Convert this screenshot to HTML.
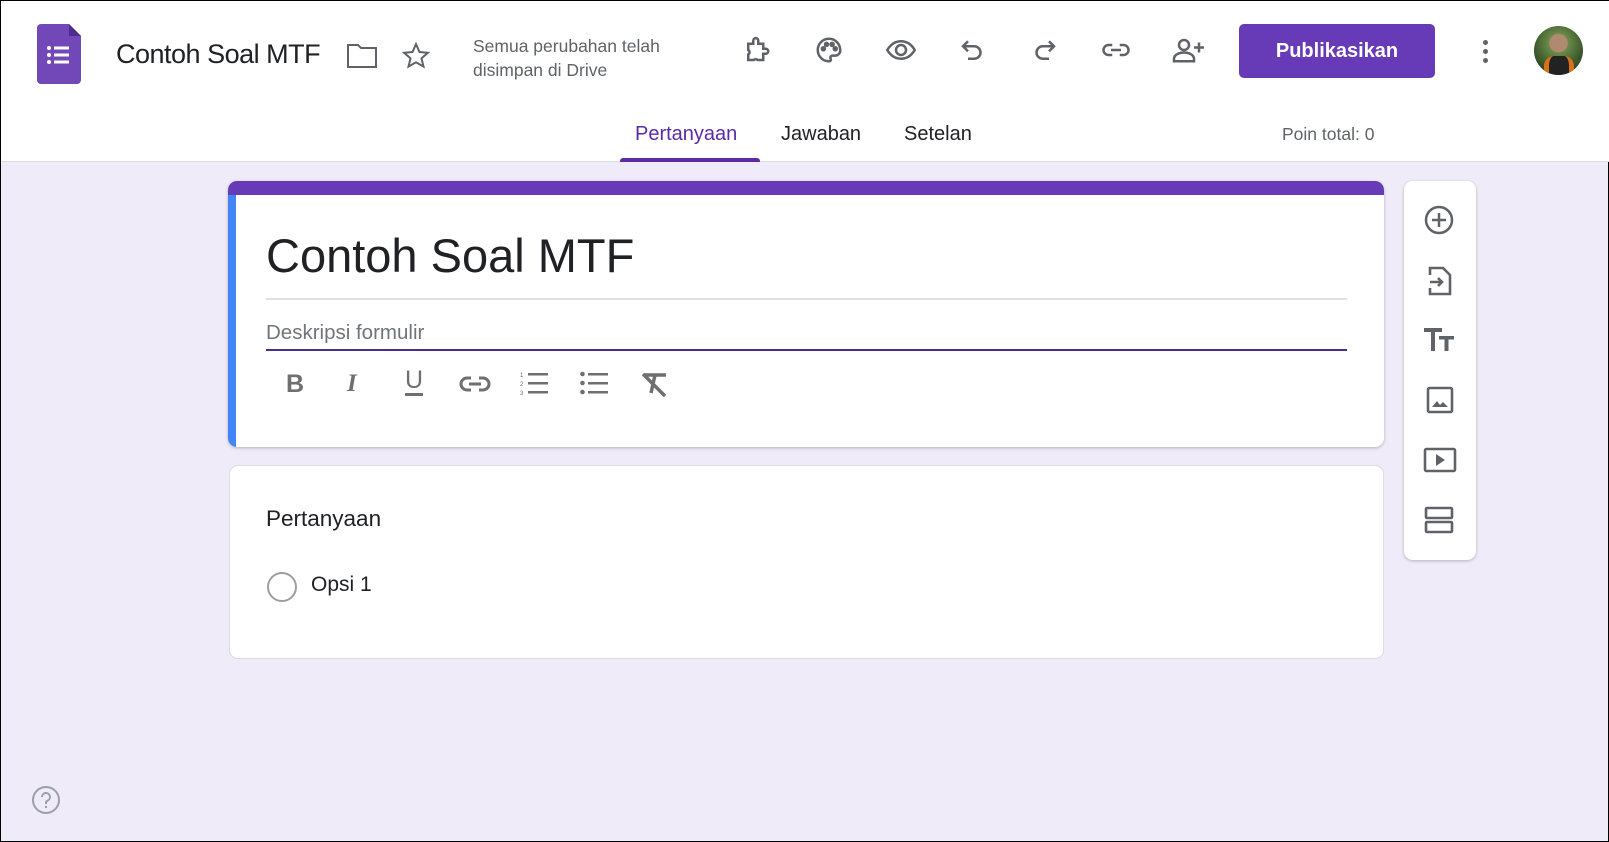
<!DOCTYPE html>
<html><head><meta charset="utf-8"><style>
*{box-sizing:border-box;margin:0;padding:0}
body{width:1609px;height:842px;overflow:hidden;background:#f0ebf8;font-family:"Liberation Sans",Arial,sans-serif;position:relative;border:1px solid #000}
.abs{position:absolute}
.hdr{left:0;top:0;width:1609px;height:161px;background:#fff;border-bottom:1px solid #dadce0}
svg.i{position:absolute;fill:none;stroke:#5f6368;stroke-width:2}
.card{background:#fff;border-radius:9px;border:1px solid #dadce0}
</style></head><body>
<div class="abs hdr"></div>
<svg class="abs" style="left:36px;top:23px" width="44" height="60" viewBox="0 0 44 60"><path d="M4 0H32L44 12V56a4 4 0 0 1-4 4H4a4 4 0 0 1-4-4V4a4 4 0 0 1 4-4z" fill="#7248b9"/><path d="M32 0L44 12H32z" fill="#4d2b8f"/><g fill="#fff"><circle cx="12" cy="24" r="2"/><circle cx="12" cy="31" r="2"/><circle cx="12" cy="38" r="2"/><rect x="17" y="22.5" width="15" height="3"/><rect x="17" y="29.5" width="15" height="3"/><rect x="17" y="36.5" width="15" height="3"/></g></svg>
<div class="abs" style="left:115px;top:38px;font-size:27px;color:#202124;letter-spacing:-0.5px">Contoh Soal MTF</div>
<svg class="i" style="left:345px;top:41px" width="32" height="28" viewBox="0 0 32 28"><path d="M2 3h10l3 3h15v19H2z"/></svg>
<svg class="i" style="left:400px;top:40px" width="30" height="30" viewBox="0 0 24 24"><path d="M12 2.5l2.8 6.3 6.7.6-5.1 4.5 1.6 6.6L12 17l-6 3.5 1.6-6.6-5.1-4.5 6.7-.6z" stroke-width="1.6"/></svg>
<div class="abs" style="left:472px;top:33px;font-size:17.5px;line-height:24px;color:#5f6368">Semua perubahan telah<br>disimpan di Drive</div>
<svg class="i" style="left:741px;top:34px" width="30" height="30" viewBox="0 0 24 24"><path d="M5 7h4V4.5a2 2 0 0 1 4 0V7h4v4h2a2 2 0 0 1 0 4h-2v5h-4.5a2 2 0 0 0-3 0H5v-4.5a2 2 0 0 0 0-3.5z"/></svg>
<svg class="i" style="left:813px;top:34px" width="30" height="30" viewBox="0 0 24 24"><path d="M12 3a9 9 0 0 0 0 18c1.5 0 1.8-1 1.3-2-.6-1.2.2-2.5 1.5-2.5H17a4 4 0 0 0 4-4C21 7 17 3 12 3z"/><circle cx="7.5" cy="11" r="1.2" fill="#5f6368"/><circle cx="10" cy="7.5" r="1.2" fill="#5f6368"/><circle cx="14.5" cy="7.5" r="1.2" fill="#5f6368"/><circle cx="17" cy="11" r="1.2" fill="#5f6368"/></svg>
<svg class="i" style="left:883px;top:34px" width="34" height="30" viewBox="0 0 26 24"><path d="M2 12c3-5 7-7 11-7s8 2 11 7c-3 5-7 7-11 7S5 17 2 12z"/><circle cx="13" cy="12" r="4"/></svg>
<svg class="i" style="left:957px;top:34px" width="30" height="30" viewBox="0 0 24 24"><path d="M8 5L4 9l4 4M4 9h9a5 5 0 0 1 0 10H8"/></svg>
<svg class="i" style="left:1028px;top:34px" width="30" height="30" viewBox="0 0 24 24"><path d="M16 5l4 4-4 4M20 9h-9a5 5 0 0 0 0 10h5"/></svg>
<svg class="i" style="left:1098px;top:34px" width="34" height="30" viewBox="0 0 26 24"><path d="M10 8H7a4 4 0 0 0 0 8h3M16 8h3a4 4 0 0 1 0 8h-3M9 12h8"/></svg>
<svg class="i" style="left:1170px;top:34px" width="36" height="30" viewBox="0 0 28 24"><circle cx="10" cy="8" r="4"/><path d="M2 21v-2c0-3 4-5 8-5s8 2 8 5v2zM22 6v8M18 10h8"/></svg>
<div class="abs" style="left:1238px;top:23px;width:196px;height:54px;background:#673ab7;border-radius:5px;color:#fff;font-size:20px;font-weight:bold;text-align:center;line-height:54px">Publikasikan</div>
<div class="abs" style="left:1482px;top:39px;width:6px"><div style="width:5px;height:5px;border-radius:50%;background:#5f6368;margin-bottom:4px"></div><div style="width:5px;height:5px;border-radius:50%;background:#5f6368;margin-bottom:4px"></div><div style="width:5px;height:5px;border-radius:50%;background:#5f6368"></div></div>
<div class="abs" style="left:1533px;top:25px;width:49px;height:49px;border-radius:50%;background:radial-gradient(circle at 50% 35%,#b08a70 0 22%,#6b8a4a 24%,#3c5a2c 60%,#2a2a20 100%);overflow:hidden"><div style="position:absolute;left:10px;top:30px;width:30px;height:22px;background:#222;border-radius:10px 10px 0 0;border-left:5px solid #d9701a;border-right:5px solid #d9701a"></div></div>
<div class="abs" style="left:634px;top:122px;font-size:20px;color:#5b2ba5">Pertanyaan</div>
<div class="abs" style="left:619px;top:157px;width:140px;height:4px;background:#5b2ba5;border-radius:3px 3px 0 0"></div>
<div class="abs" style="left:780px;top:122px;font-size:20px;color:#202124">Jawaban</div>
<div class="abs" style="left:903px;top:122px;font-size:20px;color:#202124">Setelan</div>
<div class="abs" style="left:1281px;top:123px;font-size:17.5px;color:#5f6368">Poin total: 0</div>
<div class="abs card" style="left:227px;top:180px;width:1156px;height:266px;overflow:hidden;box-shadow:0 1px 3px rgba(0,0,0,.25);border:none">
<div style="height:14px;background:#673ab7"></div>
<div style="position:absolute;left:0;top:14px;width:8px;bottom:0;background:#4285f4"></div>
<div style="position:absolute;left:38px;top:47px;font-size:47px;color:#202124">Contoh Soal MTF</div>
<div style="position:absolute;left:38px;top:117px;width:1081px;height:2px;background:#e0e0e0"></div>
<div style="position:absolute;left:38px;top:140px;font-size:20.5px;color:#70757a">Deskripsi formulir</div>
<div style="position:absolute;left:38px;top:168px;width:1081px;height:2px;background:#4a2d8f"></div>
</div>
<div class="abs" style="left:285px;top:369px;font-size:25px;font-weight:bold;color:#6f6f6f">B</div>
<div class="abs" style="left:346px;top:369px;font-size:25px;font-weight:bold;font-style:italic;color:#6f6f6f;font-family:'Liberation Serif',serif">I</div>
<div class="abs" style="left:404px;top:366px;font-size:25px;color:#6f6f6f;border-bottom:3px solid #6f6f6f;line-height:26px">U</div>
<svg class="i" style="left:458px;top:371px" width="32" height="24" viewBox="0 0 32 24" ><path d="M12 6H8a6 6 0 0 0 0 12h4M20 6h4a6 6 0 0 1 0 12h-4M10 12h12" stroke="#6f6f6f" stroke-width="3"/></svg>
<svg class="abs" style="left:519px;top:370px" width="30" height="26" viewBox="0 0 30 26"><g fill="#6f6f6f" font-size="6" font-family="Liberation Sans"><text x="0" y="6">1</text><text x="0" y="15">2</text><text x="0" y="24">3</text><rect x="8" y="2" width="20" height="2.5"/><rect x="8" y="11" width="20" height="2.5"/><rect x="8" y="20" width="20" height="2.5"/></g></svg>
<svg class="abs" style="left:579px;top:370px" width="30" height="26" viewBox="0 0 30 26"><g fill="#6f6f6f"><circle cx="2.5" cy="3" r="2.3"/><circle cx="2.5" cy="12" r="2.3"/><circle cx="2.5" cy="21" r="2.3"/><rect x="8" y="2" width="20" height="2.5"/><rect x="8" y="11" width="20" height="2.5"/><rect x="8" y="20" width="20" height="2.5"/></g></svg>
<svg class="abs" style="left:639px;top:370px" width="30" height="28" viewBox="0 0 30 28"><g fill="none" stroke="#6f6f6f" stroke-width="3.5"><path d="M4 4h22M15 4l-4 18M3 3l22 22"/></g></svg>
<div class="abs card" style="left:228px;top:464px;width:1155px;height:194px">
<div style="position:absolute;left:36px;top:40px;font-size:22.5px;color:#202124">Pertanyaan</div>
<div style="position:absolute;left:37px;top:106px;width:30px;height:30px;border-radius:50%;border:2px solid #9e9e9e"></div>
<div style="position:absolute;left:81px;top:107px;font-size:21px;color:#202124">Opsi 1</div>
</div>
<div class="abs card" style="left:1403px;top:180px;width:72px;height:379px;box-shadow:0 1px 3px rgba(0,0,0,.25);border:none"></div>
<svg class="i" style="left:1423px;top:204px" width="30" height="30" viewBox="0 0 30 30"><circle cx="15" cy="15" r="13" stroke-width="2.5"/><path d="M15 8v14M8 15h14" stroke-width="2.5"/></svg>
<svg class="i" style="left:1425px;top:264px" width="28" height="32" viewBox="0 0 28 32"><path d="M4 10V3h13l7 7v19H4v-6M4 17h12M12 13l4 4-4 4" stroke-width="2.6"/></svg>
<svg class="abs" style="left:1423px;top:325px" width="32" height="28" viewBox="0 0 32 28"><g fill="#5f6368"><rect x="0" y="2" width="18" height="4"/><rect x="7" y="2" width="4" height="23"/><rect x="15" y="10" width="15" height="3.5"/><rect x="20.5" y="10" width="4" height="15"/></g></svg>
<svg class="i" style="left:1425px;top:385px" width="28" height="28" viewBox="0 0 28 28"><rect x="2" y="2" width="24" height="24" rx="1.5" stroke-width="2.6"/><path d="M6 21l5-6 3 4 3-3 5 5z" fill="#5f6368" stroke="none"/></svg>
<svg class="i" style="left:1422px;top:446px" width="34" height="26" viewBox="0 0 34 26"><rect x="2" y="2" width="30" height="22" rx="1.5" stroke-width="2.6"/><path d="M13 7l9 6-9 6z" fill="#5f6368" stroke="none"/></svg>
<svg class="i" style="left:1423px;top:504px" width="30" height="30" viewBox="0 0 30 30"><rect x="2" y="3" width="26" height="10" rx="1" stroke-width="2.6"/><rect x="2" y="17" width="26" height="10" rx="1" stroke-width="2.6"/></svg>
<svg class="i" style="left:30px;top:784px" width="30" height="30" viewBox="0 0 30 30"><circle cx="15" cy="15" r="13" stroke="#9aa0a6"/><path d="M11 12a4 4 0 1 1 5.5 3.7c-1 .5-1.5 1.2-1.5 2.3v1" stroke="#9aa0a6"/><circle cx="15" cy="22" r="1.2" fill="#9aa0a6" stroke="none"/></svg>
</body></html>
